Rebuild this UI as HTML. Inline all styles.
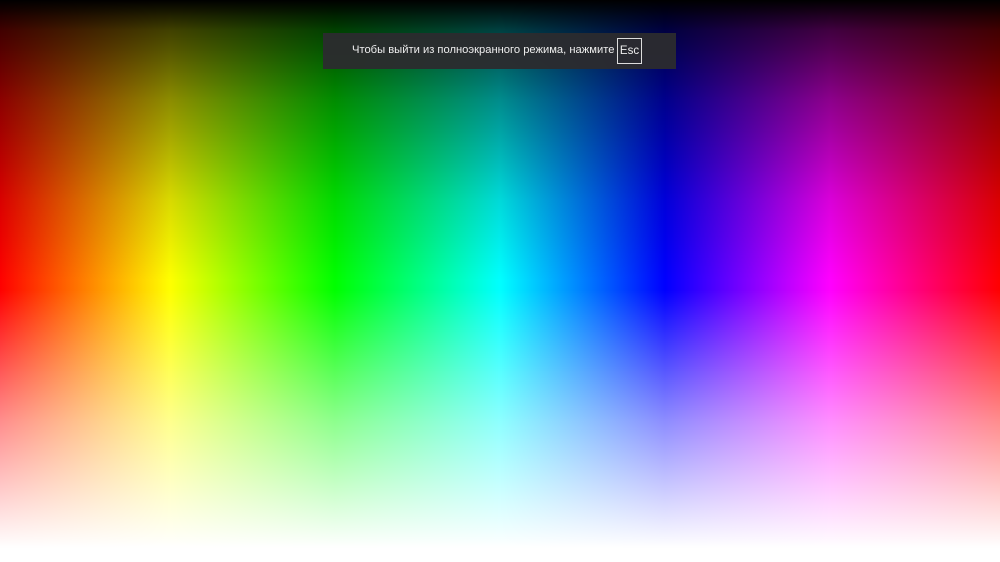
<!DOCTYPE html>
<html><head><meta charset="utf-8"><style>
html,body{margin:0;padding:0;width:1000px;height:562px;overflow:hidden}
.bg{position:absolute;inset:0;background:linear-gradient(to right,#f00 0px,#ff0 170px,#0f0 335px,#0ff 500px,#00f 665px,#f0f 830px,#f00 1000px)}
.ov{position:absolute;inset:0;background:linear-gradient(to bottom,#000 0px,rgba(0,0,0,.75) 30px,rgba(0,0,0,.45) 100px,rgba(0,0,0,.15) 200px,rgba(0,0,0,0) 280px,rgba(255,255,255,0) 290px,rgba(255,255,255,.55) 420px,#fff 548px,#fff 562px)}
.toast{position:absolute;left:323px;top:33px;width:353px;height:36px;background:rgba(43,43,46,.95);color:#eee;font:11.2px "Liberation Sans","Noto Sans CJK SC",sans-serif}
.t{position:absolute;left:29px;top:11px;white-space:nowrap}
.k{position:absolute;left:294px;top:5px;width:25px;height:26px;border:1px solid #ddd;box-sizing:border-box;text-align:center;line-height:24px;font-size:11.5px}
</style></head><body>
<div class="bg"></div><div class="ov"></div>
<div class="toast"><span class="t">Чтобы выйти из полноэкранного режима, нажмите</span><span class="k">Esc</span></div>
</body></html>
